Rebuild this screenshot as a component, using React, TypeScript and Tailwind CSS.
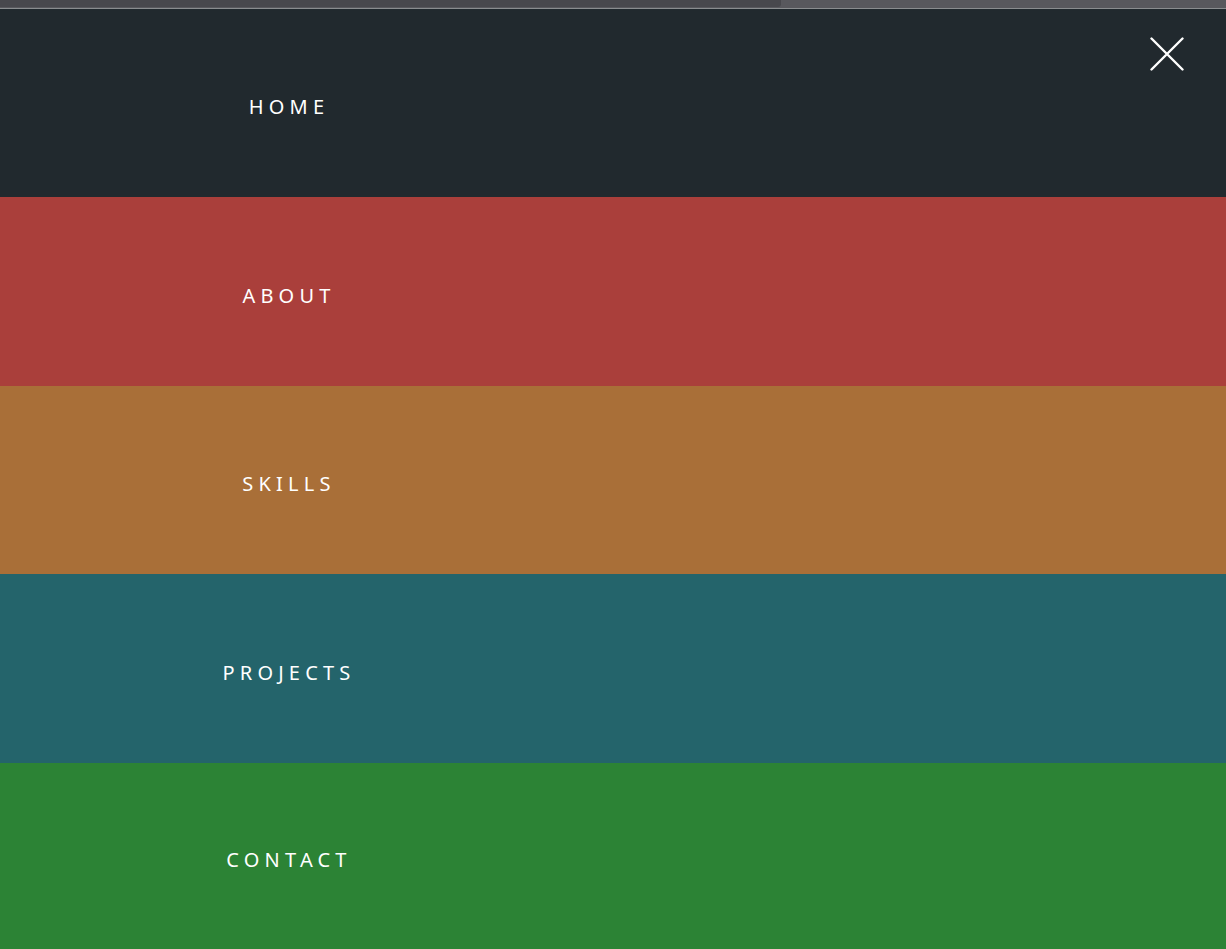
const links = [
  { name: 'HOME', bg: 'bg-[#21292e]', h: 'h-[188px]' },
  { name: 'ABOUT', bg: 'bg-[#aa3f3b]', h: 'h-[189px]' },
  { name: 'SKILLS', bg: 'bg-[#a96f38]', h: 'h-[188px]' },
  { name: 'PROJECTS', bg: 'bg-[#24646b]', h: 'h-[189px]' },
  { name: 'CONTACT', bg: 'bg-[#2c8335]', h: 'h-[186px]' },
]

export default function App() {
  return (
    <div className="w-[1226px] h-[949px] overflow-hidden flex flex-col" style={{ fontFamily: '"Noto Sans", Lato, sans-serif' }}>
      {/* top strip */}
      <div className="h-[8px] shrink-0 bg-[#58585d] flex">
        <div className="w-[781px] h-[7px] bg-[#48484d] rounded-br-[3px]" />
      </div>
      <div className="h-px shrink-0 bg-[#8a8d8f]" />

      {/* Menu */}
      <nav className="relative flex-1 flex flex-col">
        {links.map((item) => (
          <a
            key={item.name}
            href="#"
            className={`${item.h} shrink-0 flex items-center ${item.bg}`}
          >
            <span className="w-[578px] pt-[8px] text-center text-white text-[20px] tracking-[0.26em]">
              {item.name}
            </span>
          </a>
        ))}

        <button className="absolute top-[28px] right-[42px] text-white">
          <svg width="34" height="34" viewBox="0 0 34 34" fill="none" stroke="currentColor" strokeWidth="2.4" strokeLinecap="round">
            <path d="M1.5 1.5L32.5 32.5M32.5 1.5L1.5 32.5" />
          </svg>
        </button>
      </nav>
    </div>
  )
}
